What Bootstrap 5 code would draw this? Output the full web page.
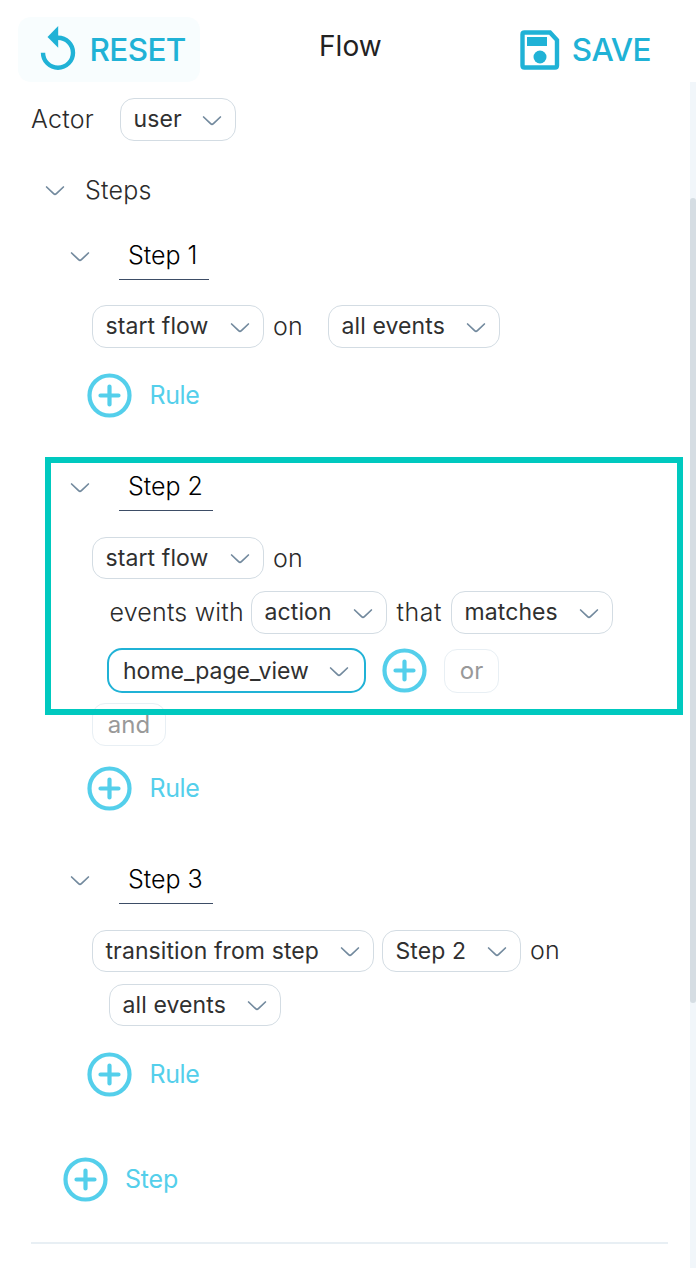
<!DOCTYPE html>
<html lang="en">
<head>
<meta charset="utf-8">
<meta name="viewport" content="width=device-width, initial-scale=1">
<title>Flow</title>
<link href="https://cdn.jsdelivr.net/npm/bootstrap@5.3.0/dist/css/bootstrap.min.css" rel="stylesheet">
<style>
body{font-family:Inter,"Open Sans",sans-serif;font-size:25px;font-weight:300;line-height:1;letter-spacing:.07px;color:#2b2b2b;background:#fff;width:696px;height:1268px;overflow:hidden}
.topbar{height:82px;padding:17px 45px 0 18px}
.topbar h1{font-size:28px;font-weight:400;letter-spacing:.05px;margin:15px 0 0 -19px;color:#222;line-height:1}
.btn-tool{height:65px;padding:0;border:0;border-radius:13px;color:#20b2d6;font-size:31.5px;font-weight:500;letter-spacing:-.6px;line-height:1}
.btn-tool:hover{color:#20b2d6}
.btn-reset{width:182px;background:#f8fdfe;padding-left:18px}
.workspace{height:1186px}
.content-pane{width:690px;padding-top:16px}
.scroll-track{width:6px;background:#f1f6fa;padding-top:116px}
.scroll-thumb{height:805px;border-radius:3px;background:#d5dde3}
.line{display:flex;align-items:center;height:43px;white-space:nowrap}
.pick{display:flex;align-items:center;justify-content:space-between;flex:none;height:43px;border:1px solid #d3dce3;border-radius:14px;background:#fff;padding:0 13.5px 0 12.5px;font-size:23px;font-weight:400;letter-spacing:.1px;color:#303030;line-height:1}
.pick .chev{margin-top:3px}
.pick.current{height:45px;border:2px solid #20b2d6;border-radius:15px;padding:0 15px 0 14px;letter-spacing:0}
.pick span,.line>span{padding-bottom:1px}
.pick.short{height:42px}
.pick.short span,.pick.current span{padding-bottom:0;padding-top:1px}
.pick.short .chev{margin-top:2px}
.chev{width:20px;height:12px;fill:none;stroke:#738a9e;stroke-width:1.7;stroke-linecap:round;stroke-linejoin:round;flex:none}
.step-head{display:flex;height:46px;padding-left:70px}
.step-head .chev{margin-top:17px}
.step-name{margin-left:28.5px;border-bottom:1px solid #3d4d66;height:46px;padding:9px 0 0 9.5px;color:#000;letter-spacing:0}
.ghost{display:flex;align-items:center;justify-content:center;height:43px;border:1px solid #e8eff4;border-radius:13px;color:#999;font-weight:400;font-size:24px;background:#fff;flex:none}
.add-link{display:flex;align-items:center;height:45px;color:#54cfeb;text-decoration:none;padding-left:87px;font-weight:400;letter-spacing:-.4px}
.add-link span{margin-left:17.5px}
.plus{width:45px;height:45px;fill:none;stroke:#54cfeb;stroke-width:4.2;stroke-linecap:round;flex:none}
.spotlight{position:absolute;left:45px;top:-8px;width:638px;height:258px;border:6px solid #00c9bf;pointer-events:none}
.divider{height:2px;background:#e8eff4;margin:40px 22px 0 31px}
</style>
</head>
<body>
<svg width="0" height="0" class="position-absolute">
  <symbol id="chev" viewBox="0 0 20 12"><path d="M1.6 2 L8.6 8.7 Q10 10 11.4 8.7 L18.4 2"/></symbol>
  <symbol id="plus" viewBox="0 0 45 45"><circle cx="22.5" cy="22.5" r="20"/><path d="M13.5 22.5H31.5M22.5 13.5V31.5"/></symbol>
</svg>
<header class="topbar d-flex justify-content-between align-items-start">
  <button class="btn btn-tool btn-reset d-flex align-items-center">
    <svg width="46" height="50" viewBox="0 -.7 46 50"><path d="M22 12A15 15 0 1 1 7 27" fill="none" stroke="#20b2d6" stroke-width="4.4"/><path d="M22.2.2V22L11.5 11.4Z" fill="#20b2d6"/></svg>
    <span style="margin-left:7.5px">RESET</span>
  </button>
  <h1>Flow</h1>
  <button class="btn btn-tool d-flex align-items-center">
    <svg width="40" height="40" viewBox="0 0 40 40"><path d="M4.5 2.5H30L37 10V35.5Q37 37.5 35 37.5H4.5Q2.5 37.5 2.5 35.5V4.5Q2.5 2.5 4.5 2.5Z" fill="none" stroke="#20b2d6" stroke-width="4.4"/><path d="M7 7H27V16H7Z" fill="#20b2d6"/><circle cx="20" cy="27" r="6.5" fill="#20b2d6"/></svg>
    <span style="margin-left:12px">SAVE</span>
  </button>
</header>
<div class="workspace d-flex">
<main class="content-pane">
  <div class="line" style="padding-left:31px">
    <span style="width:89px;letter-spacing:.25px">Actor</span>
    <div class="pick" style="width:116px"><span>user</span><svg class="chev"><use href="#chev"/></svg></div>
  </div>
  <div class="line" style="margin-top:28px;padding-left:45px">
    <svg class="chev"><use href="#chev"/></svg><span style="margin-left:20px;letter-spacing:.25px">Steps</span>
  </div>

  <section style="margin-top:22px">
    <div class="step-head"><svg class="chev"><use href="#chev"/></svg><div class="step-name" style="width:90px">Step 1</div></div>
    <div class="line" style="margin-top:25px;padding-left:92px">
      <div class="pick" style="width:172px"><span>start flow</span><svg class="chev"><use href="#chev"/></svg></div>
      <span style="width:55px;margin-left:9px">on</span>
      <div class="pick" style="width:172px"><span>all events</span><svg class="chev"><use href="#chev"/></svg></div>
    </div>
    <a class="add-link" style="margin-top:25px"><svg class="plus"><use href="#plus"/></svg><span>Rule</span></a>
  </section>

  <section class="position-relative" style="margin-top:47px">
    <div class="step-head"><svg class="chev"><use href="#chev"/></svg><div class="step-name" style="width:94px">Step 2</div></div>
    <div class="line" style="margin-top:26px;padding-left:92px;height:42px">
      <div class="pick short" style="width:172px"><span>start flow</span><svg class="chev"><use href="#chev"/></svg></div>
      <span class="pb-0" style="margin-left:9px">on</span>
    </div>
    <div class="line" style="margin-top:12px;padding-left:109.5px">
      <span style="width:141.5px;letter-spacing:.2px">events with</span>
      <div class="pick" style="width:136px"><span>action</span><svg class="chev"><use href="#chev"/></svg></div>
      <span style="width:54.5px;margin-left:9.5px;letter-spacing:.5px">that</span>
      <div class="pick" style="width:162px"><span>matches</span><svg class="chev"><use href="#chev"/></svg></div>
    </div>
    <div class="line" style="margin-top:14px;padding-left:107px;height:45px">
      <div class="pick current" style="width:259px"><span>home_page_view</span><svg class="chev"><use href="#chev"/></svg></div>
      <svg class="plus" style="margin-left:15.5px"><use href="#plus"/></svg>
      <div class="ghost" style="width:55px;height:44px;margin-left:17.5px">or</div>
    </div>
    <div class="line" style="margin-top:10px;padding-left:92px"><div class="ghost" style="width:74px">and</div></div>
    <a class="add-link" style="margin-top:20px"><svg class="plus"><use href="#plus"/></svg><span>Rule</span></a>
    <div class="spotlight"></div>
  </section>

  <section style="margin-top:47px">
    <div class="step-head"><svg class="chev"><use href="#chev"/></svg><div class="step-name" style="width:94px">Step 3</div></div>
    <div class="line" style="margin-top:26px;padding-left:92px;height:42px">
      <div class="pick short" style="width:282px"><span>transition from step</span><svg class="chev"><use href="#chev"/></svg></div>
      <div class="pick short" style="width:139px;margin-left:8px"><span>Step 2</span><svg class="chev"><use href="#chev"/></svg></div>
      <span style="margin-left:9px">on</span>
    </div>
    <div class="line" style="margin-top:12px;padding-left:109px;height:42px">
      <div class="pick short" style="width:172px"><span>all events</span><svg class="chev"><use href="#chev"/></svg></div>
    </div>
    <a class="add-link" style="margin-top:26px"><svg class="plus"><use href="#plus"/></svg><span>Rule</span></a>
  </section>
  <a class="add-link" style="margin-top:60px;padding-left:62.5px;letter-spacing:-.2px"><svg class="plus"><use href="#plus"/></svg><span>Step</span></a>
  <div class="divider"></div>
</main>
<div class="scroll-track"><div class="scroll-thumb"></div></div>
</div>
<script src="https://cdn.jsdelivr.net/npm/bootstrap@5.3.0/dist/js/bootstrap.bundle.min.js"></script>
</body>
</html>
